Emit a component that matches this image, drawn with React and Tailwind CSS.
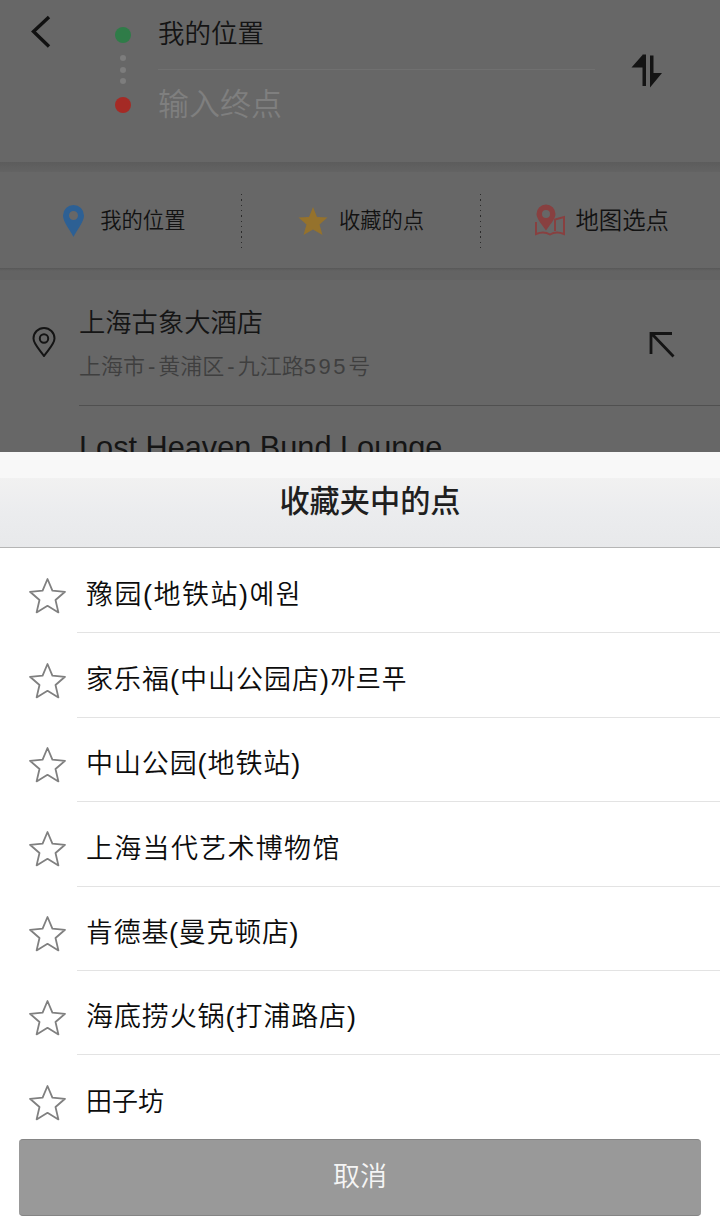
const font = "font-['Liberation_Sans','Noto_Sans_CJK_SC','Noto_Sans_CJK_KR',sans-serif]";

function Star() {
  return (
    <svg width="40" height="40" viewBox="0 0 40 40" className="mt-[10px] shrink-0">
      <path d="M19.5 3 L24.4 14.6 L37 15.8 L27.5 24 L30.4 36.4 L19.5 29.8 L8.6 36.4 L11.5 24 L2 15.8 L14.6 14.6 Z" fill="#fff" stroke="#808080" strokeWidth="1.8" strokeLinejoin="round" />
    </svg>
  );
}

function Row({ text, size, last }) {
  return (
    <div className="flex h-[84.4px] shrink-0 items-center pl-[28px]">
      <Star />
      <div className={`ml-[9px] flex h-full flex-1 items-center pl-[9px] font-[350] text-[#0c0c0c] ${size} ${last ? "" : "border-b border-[#e3e3e3]"}`}>
        <span className="mt-[10px]">{text}</span>
      </div>
    </div>
  );
}

function Dotted() {
  return <div className="h-[54px] w-[1px] shrink-0 bg-[repeating-linear-gradient(to_bottom,#2b2b2b_0px,#2b2b2b_1.5px,transparent_1.5px,transparent_5.3px)]" />;
}

function Shortcut({ icon, text, gap, width, size, offset }) {
  return (
    <div className={`flex h-[56px] items-center justify-center ${width}`}>
      <div className={`flex items-center ${gap} ${offset}`}>
        {icon}
        <span className={`mt-[2px] font-[350] text-[#121212] ${size}`}>{text}</span>
      </div>
    </div>
  );
}

const rows = [
  ["豫园(地铁站)예원", "text-[27px] tracking-[1.5px]"],
  ["家乐福(中山公园店)까르푸", "text-[27px] tracking-[1px]"],
  ["中山公园(地铁站)", "text-[27px] tracking-[0.9px]"],
  ["上海当代艺术博物馆", "text-[27px] tracking-[1.3px]"],
  ["肯德基(曼克顿店)", "text-[27px] tracking-[0.7px]"],
  ["海底捞火锅(打浦路店)", "text-[27px] tracking-[0.9px]"],
  ["田子坊", "text-[26px]"],
];

export default function App() {
  return (
    <div className={`flex h-[1231px] w-[720px] flex-col overflow-hidden bg-white ${font}`}>
      <div className="flex h-[452px] shrink-0 flex-col overflow-hidden bg-[#676767]">
        <div className="flex h-[162px] shrink-0 items-start">
          <div className="w-[114px] shrink-0 pl-[30px] pt-[15px]">
            <svg width="24" height="34" viewBox="0 0 24 34">
              <path d="M19 2 L3.5 16.5 L19 31.5" fill="none" stroke="#111" strokeWidth="3.4" />
            </svg>
          </div>
          <div className="flex w-[18px] shrink-0 flex-col items-center pt-[27px]">
            <div className="h-[16px] w-[16px] rounded-full bg-[#2f7c48]" />
            <div className="mt-[12px] flex flex-col gap-[5.5px]">
              <div className="h-[6px] w-[6px] rounded-full bg-[#7d7d7d]" />
              <div className="h-[6px] w-[6px] rounded-full bg-[#7d7d7d]" />
              <div className="h-[6px] w-[6px] rounded-full bg-[#7d7d7d]" />
            </div>
            <div className="mt-[13px] h-[16px] w-[16px] rounded-full bg-[#a52a25]" />
          </div>
          <div className="ml-[26px] flex w-[437px] shrink-0 flex-col">
            <div className="flex h-[70px] items-center border-b border-[#707070] text-[26.5px] font-[350] text-[#141414]">我的位置</div>
            <div className="flex h-[66px] items-center pt-[4px] text-[31px] font-[350] text-[#7f7f7f]">输入终点</div>
          </div>
          <div className="ml-[36px] pt-[54px]">
            <svg width="32" height="34" viewBox="0 0 32 34">
              <path d="M11.5 0.5 V32 H15 V0.5 Z M11.5 1 L0.5 13.5 H11.5 Z" fill="#141414" />
              <path d="M19 1.5 V33.5 L31 19 H22.5 V1.5 Z" fill="#141414" />
            </svg>
          </div>
        </div>
        <div className="h-[10px] shrink-0 bg-[linear-gradient(to_bottom,#5c5c5c,#636363)]" />
        <div className="flex h-[96px] shrink-0 items-center justify-center pt-[1px]">
          <Shortcut
            width="w-[241px]"
            gap="gap-[15px]"
            offset="ml-[7px]"
            size="text-[21.3px]"
            icon={
              <svg width="23" height="34" viewBox="0 0 23 34">
                <path fillRule="evenodd" d="M11.5 33 C8 26 1 18 1 11.5 A10.5 10.5 0 0 1 22 11.5 C22 18 15 26 11.5 33 Z M11.5 7 A4.5 4.5 0 1 0 11.5 16 A4.5 4.5 0 1 0 11.5 7 Z" fill="#2d6094" />
              </svg>
            }
            text="我的位置"
          />
          <Dotted />
          <Shortcut
            width="w-[239px]"
            gap="gap-[11px]"
            offset=""
            size="text-[21.3px]"
            icon={
              <svg width="30" height="30" viewBox="0 0 30 30">
                <path d="M15 1 L19 11 L29.5 11.5 L21.5 18.5 L24.5 29 L15 23.5 L5.5 29 L8.5 18.5 L0.5 11.5 L11 11 Z" fill="#95722c" />
              </svg>
            }
            text="收藏的点"
          />
          <Dotted />
          <Shortcut
            width="w-[239px]"
            gap="gap-[10px]"
            offset="ml-[3px]"
            size="text-[23.4px]"
            icon={
              <svg width="30" height="32" viewBox="0 0 30 32">
                <path fillRule="evenodd" d="M11 0.5 A9.5 9.5 0 0 1 20.5 10 C20.5 15 14 22 11 26.5 C8 22 1.5 15 1.5 10 A9.5 9.5 0 0 1 11 0.5 Z M11 6 A4 4 0 1 0 11 14 A4 4 0 1 0 11 6 Z" fill="#884040" />
                <path d="M1 18 V30 C6 28 11 28 15 30.5 C19 28 24 28 29 30 V13 L20 15.5 V27" fill="none" stroke="#884040" strokeWidth="2" />
              </svg>
            }
            text="地图选点"
          />
        </div>
        <div className="h-[12px] shrink-0 bg-[linear-gradient(to_bottom,#585858,#636363_25%,#636363)]" />
        <div className="flex h-[126px] shrink-0 items-start">
          <div className="w-[79px] shrink-0 pl-[32px] pt-[47px]">
            <svg width="24" height="30" viewBox="0 0 24 30">
              <path d="M12 29 C8 23 1.5 17 1.5 11.5 A10.5 10.5 0 0 1 22.5 11.5 C22.5 17 16 23 12 29 Z" fill="none" stroke="#141414" strokeWidth="2" />
              <circle cx="12" cy="11.5" r="4.2" fill="none" stroke="#141414" strokeWidth="2" />
            </svg>
          </div>
          <div className="flex h-full flex-1 items-start border-b border-[#505050]">
            <div className="flex flex-1 flex-col">
              <div className="mt-[24px] h-[38px] text-[26.3px] font-[350] leading-[38px] text-[#151515]">上海古象大酒店</div>
              <div className="mt-[9px] flex text-[22px] font-[350] leading-[32px] text-[#3f3f3f]">
                <span>上海市</span>
                <span className="mx-[3px]">-</span>
                <span>黄浦区</span>
                <span className="mx-[3px]">-</span>
                <span>九江路</span>
                <span className="tracking-[2.6px]">595</span>
                <span>号</span>
              </div>
            </div>
            <div className="mr-[43px] pt-[51px]">
              <svg width="28" height="28" viewBox="0 0 28 28">
                <path d="M24.5 25.5 L3 3 M2 23 V2.5 H23" fill="none" stroke="#141414" strokeWidth="2.8" />
              </svg>
            </div>
          </div>
        </div>
        <div className="pl-[79px] pt-[25px] text-[30.7px] leading-[34px] text-[#151515]">Lost Heaven Bund Lounge</div>
      </div>
      <div className="flex h-[96px] shrink-0 items-center justify-center border-b border-[#b5b5b5] bg-[linear-gradient(to_bottom,#f8f8f8_0%,#f8f8f8_27%,#f1f1f1_28%,#ebecee_65%,#e8e9eb_100%)] pl-[20px] pt-[4px] text-[30.2px] font-medium text-[#1f1f1f]">
        收藏夹中的点
      </div>
      <div className="flex h-[591px] shrink-0 flex-col overflow-hidden pt-[1px]">
        {rows.map(([t, s], i) => (
          <Row key={t} text={t} size={s} last={i === rows.length - 1} />
        ))}
      </div>
      <div className="mx-[19px] flex h-[77px] shrink-0 items-center justify-center rounded-[4px] border-t border-b border-[#858585] bg-[#999999] text-[27px] font-[350] text-[#f5f5f5]">
        取消
      </div>
    </div>
  );
}
